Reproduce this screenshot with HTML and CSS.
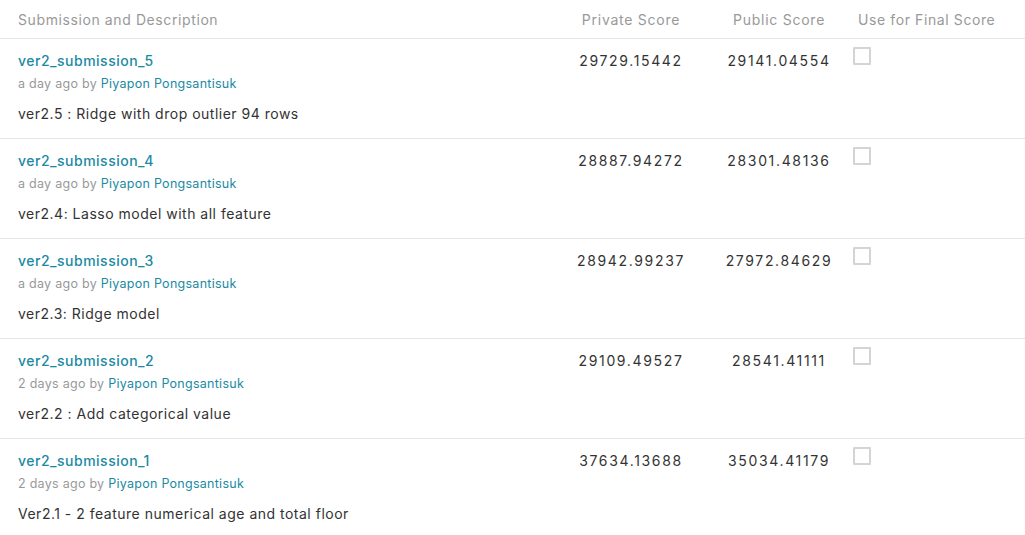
FILE: index.html
```html
<!DOCTYPE html>
<html>
<head>
<meta charset="utf-8">
<link rel="stylesheet" href="styles.css">
</head>
<body>
<div class="table">
  <div class="row head">
    <div class="c1">Submission and Description</div>
    <div class="c2">Private Score</div>
    <div class="c3">Public Score</div>
    <div class="c4 hfinal">Use for Final Score</div>
  </div>

  <div class="row">
    <div class="c1">
      <div class="title">ver2_submission_5</div>
      <div class="meta">a day ago by <span class="author">Piyapon Pongsantisuk</span></div>
      <div class="desc">ver2.5 : Ridge with drop outlier 94 rows</div>
    </div>
    <div class="c2 score">29729.15442</div>
    <div class="c3 score">29141.04554</div>
    <div class="c4"><span class="box"></span></div>
  </div>

  <div class="row">
    <div class="c1">
      <div class="title">ver2_submission_4</div>
      <div class="meta">a day ago by <span class="author">Piyapon Pongsantisuk</span></div>
      <div class="desc">ver2.4: Lasso model with all feature</div>
    </div>
    <div class="c2 score">28887.94272</div>
    <div class="c3 score">28301.48136</div>
    <div class="c4"><span class="box"></span></div>
  </div>

  <div class="row">
    <div class="c1">
      <div class="title">ver2_submission_3</div>
      <div class="meta">a day ago by <span class="author">Piyapon Pongsantisuk</span></div>
      <div class="desc">ver2.3: Ridge model</div>
    </div>
    <div class="c2 score">28942.99237</div>
    <div class="c3 score">27972.84629</div>
    <div class="c4"><span class="box"></span></div>
  </div>

  <div class="row">
    <div class="c1">
      <div class="title">ver2_submission_2</div>
      <div class="meta">2 days ago by <span class="author">Piyapon Pongsantisuk</span></div>
      <div class="desc">ver2.2 : Add categorical value</div>
    </div>
    <div class="c2 score">29109.49527</div>
    <div class="c3 score">28541.41111</div>
    <div class="c4"><span class="box"></span></div>
  </div>

  <div class="row last">
    <div class="c1">
      <div class="title">ver2_submission_1</div>
      <div class="meta">2 days ago by <span class="author">Piyapon Pongsantisuk</span></div>
      <div class="desc">Ver2.1 - 2 feature numerical age and total floor</div>
    </div>
    <div class="c2 score">37634.13688</div>
    <div class="c3 score">35034.41179</div>
    <div class="c4"><span class="box"></span></div>
  </div>
</div>
</body>
</html>
```

FILE: styles.css
```css
* { box-sizing: border-box; }
html, body {
  margin: 0;
  padding: 0;
  background: #fff;
}
body {
  font-family: Inter, "Liberation Sans", sans-serif;
  color: #333;
  font-size: 14px;
}
.table {
  width: 1025px;
}
.row {
  display: grid;
  grid-template-columns: 556px 150px 146px 1fr;
  border-bottom: 1px solid #e6e6e6;
  height: 100px;
  padding-top: 13px;
}
.row.head {
  height: 39px;
  padding-top: 11px;
  color: #999;
  font-size: 14px;
  letter-spacing: 0.6px;
}
.row.head .c2, .row.head .c3 {
  letter-spacing: 0.75px;
}
.row.last {
  border-bottom: none;
}
.c1 {
  padding-left: 18px;
}
.c2, .c3 {
  text-align: center;
}
.hfinal {
  padding-left: 6px;
}
.title {
  color: #1a8aa3;
  font-size: 14px;
  line-height: 18px;
  font-weight: 500;
  letter-spacing: 0.5px;
}
.meta {
  color: #999;
  font-size: 12.5px;
  line-height: 16px;
  margin-top: 6px;
  letter-spacing: 0.27px;
}
.author {
  color: #1a8aa3;
}
.desc {
  font-size: 14px;
  line-height: 18px;
  margin-top: 13px;
  letter-spacing: 0.5px;
}
.score {
  font-size: 14px;
  line-height: 18px;
  letter-spacing: 1.65px;
}
.box {
  display: block;
  width: 18px;
  height: 18px;
  border: 2px solid #d4d4d4;
  border-radius: 1px;
  margin-left: 1px;
  margin-top: -5px;
}
```
